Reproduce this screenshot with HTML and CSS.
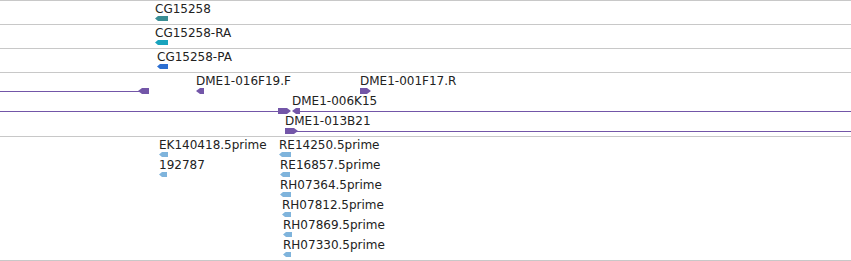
FILE: index.html
```html
<!DOCTYPE html>
<html lang="en">
<head>
  <meta charset="UTF-8" />
  <title>Tracks</title>
  <link rel="stylesheet" href="styles.css">
</head>
<body>

<div class="tracks">

  <!-- Gene -->
  <div class="track gene">
    <div class="feature" style="left:155px; top:0px;">
      <div class="label">CG15258</div>
      <svg class="glyph" width="13" height="5"><polygon points="0,2.5 3,0 13,0 13,5 3,5"/></svg>
    </div>
  </div>

  <!-- Transcript -->
  <div class="track transcript">
    <div class="feature" style="left:155px; top:0px;">
      <div class="label">CG15258-RA</div>
      <svg class="glyph" width="13" height="5"><polygon points="0,2.5 3,0 13,0 13,5 3,5"/></svg>
    </div>
  </div>

  <!-- Protein -->
  <div class="track protein">
    <div class="feature" style="left:157px; top:0px;">
      <div class="label">CG15258-PA</div>
      <svg class="glyph" width="11" height="5"><polygon points="0,2.5 3,0 11,0 11,5 3,5"/></svg>
    </div>
  </div>

  <!-- BAC / clones -->
  <div class="track clones">
    <div class="strand" style="left:0px; width:140px; top:18px;"></div>
    <div class="feature" style="left:138px; top:0px;">
      <div class="label">&nbsp;</div>
      <svg class="glyph" width="11" height="6"><polygon points="0,3 4,0 11,0 11,6 4,6"/></svg>
    </div>

    <div class="feature" style="left:196px; top:0px;">
      <div class="label">DME1-016F19.F</div>
      <svg class="glyph" width="8" height="6"><polygon points="0,3 4,0 8,0 8,6 4,6"/></svg>
    </div>

    <div class="feature" style="left:360px; top:0px;">
      <div class="label">DME1-001F17.R</div>
      <svg class="glyph" width="11" height="6"><polygon points="0,0 7,0 11,3 7,6 0,6"/></svg>
    </div>

    <div class="strand" style="left:0px; width:280px; top:38px;"></div>
    <div class="feature" style="left:278px; top:20px;">
      <div class="label">&nbsp;</div>
      <svg class="glyph" width="13" height="6"><polygon points="0,0 9,0 13,3 9,6 0,6"/></svg>
    </div>

    <div class="strand" style="left:298px; width:553px; top:38px;"></div>
    <div class="feature" style="left:292px; top:20px;">
      <div class="label">DME1-006K15</div>
      <svg class="glyph" width="8" height="6"><polygon points="0,3 4,0 8,0 8,6 4,6"/></svg>
    </div>

    <div class="strand" style="left:296px; width:555px; top:58px;"></div>
    <div class="feature" style="left:285px; top:40px;">
      <div class="label">DME1-013B21</div>
      <svg class="glyph" width="13" height="6"><polygon points="0,0 9,0 13,3 9,6 0,6"/></svg>
    </div>
  </div>

  <!-- EST -->
  <div class="track est">
    <div class="feature" style="left:159px; top:0px;">
      <div class="label">EK140418.5prime</div>
      <svg class="glyph" width="9" height="5"><polygon points="0,2.5 3,0 9,0 9,5 3,5"/></svg>
    </div>
    <div class="feature" style="left:159px; top:20px;">
      <div class="label">192787</div>
      <svg class="glyph" width="8" height="5"><polygon points="0,2.5 3,0 8,0 8,5 3,5"/></svg>
    </div>

    <div class="feature" style="left:279px; top:0px;">
      <div class="label">RE14250.5prime</div>
      <svg class="glyph" width="12" height="5"><polygon points="0,2.5 3,0 12,0 12,5 3,5"/></svg>
    </div>
    <div class="feature" style="left:280px; top:20px;">
      <div class="label">RE16857.5prime</div>
      <svg class="glyph" width="10" height="5"><polygon points="0,2.5 3,0 10,0 10,5 3,5"/></svg>
    </div>
    <div class="feature" style="left:280px; top:40px;">
      <div class="label">RH07364.5prime</div>
      <svg class="glyph" width="11" height="5"><polygon points="0,2.5 3,0 11,0 11,5 3,5"/></svg>
    </div>
    <div class="feature" style="left:282px; top:60px;">
      <div class="label">RH07812.5prime</div>
      <svg class="glyph" width="9" height="5"><polygon points="0,2.5 3,0 9,0 9,5 3,5"/></svg>
    </div>
    <div class="feature" style="left:283px; top:80px;">
      <div class="label">RH07869.5prime</div>
      <svg class="glyph" width="9" height="5"><polygon points="0,2.5 3,0 9,0 9,5 3,5"/></svg>
    </div>
    <div class="feature" style="left:283px; top:100px;">
      <div class="label">RH07330.5prime</div>
      <svg class="glyph" width="8" height="5"><polygon points="0,2.5 3,0 8,0 8,5 3,5"/></svg>
    </div>
  </div>

</div>

</body>
</html>
```

FILE: styles.css
```css
body {
  margin: 0;
  padding: 0;
  background: #fff;
  font-family: 'DejaVu Sans', sans-serif;
  font-size: 12px;
  color: #222;
}
.tracks {
  width: 851px;
  border-top: 1px solid #c8c8c8;
}
.track {
  position: relative;
  height: 23px;
  border-bottom: 1px solid #c8c8c8;
  overflow: hidden;
}
.track.clones {
  height: 63px;
}
.track.est {
  height: 123px;
}
.feature {
  position: absolute;
  white-space: nowrap;
}
.label {
  line-height: 14px;
  height: 13px;
  padding-top: 1px;
}
.glyph {
  display: block;
  margin-top: 1px;
}
.strand {
  position: absolute;
  height: 1px;
  background: #7356a8;
}
.gene .glyph { fill: #3a8e94; }
.transcript .glyph { fill: #18a3bd; }
.protein .glyph { fill: #2c6fd2; }
.clones .glyph { fill: #7356a8; }
.est .glyph { fill: #7fb4dc; }
```
